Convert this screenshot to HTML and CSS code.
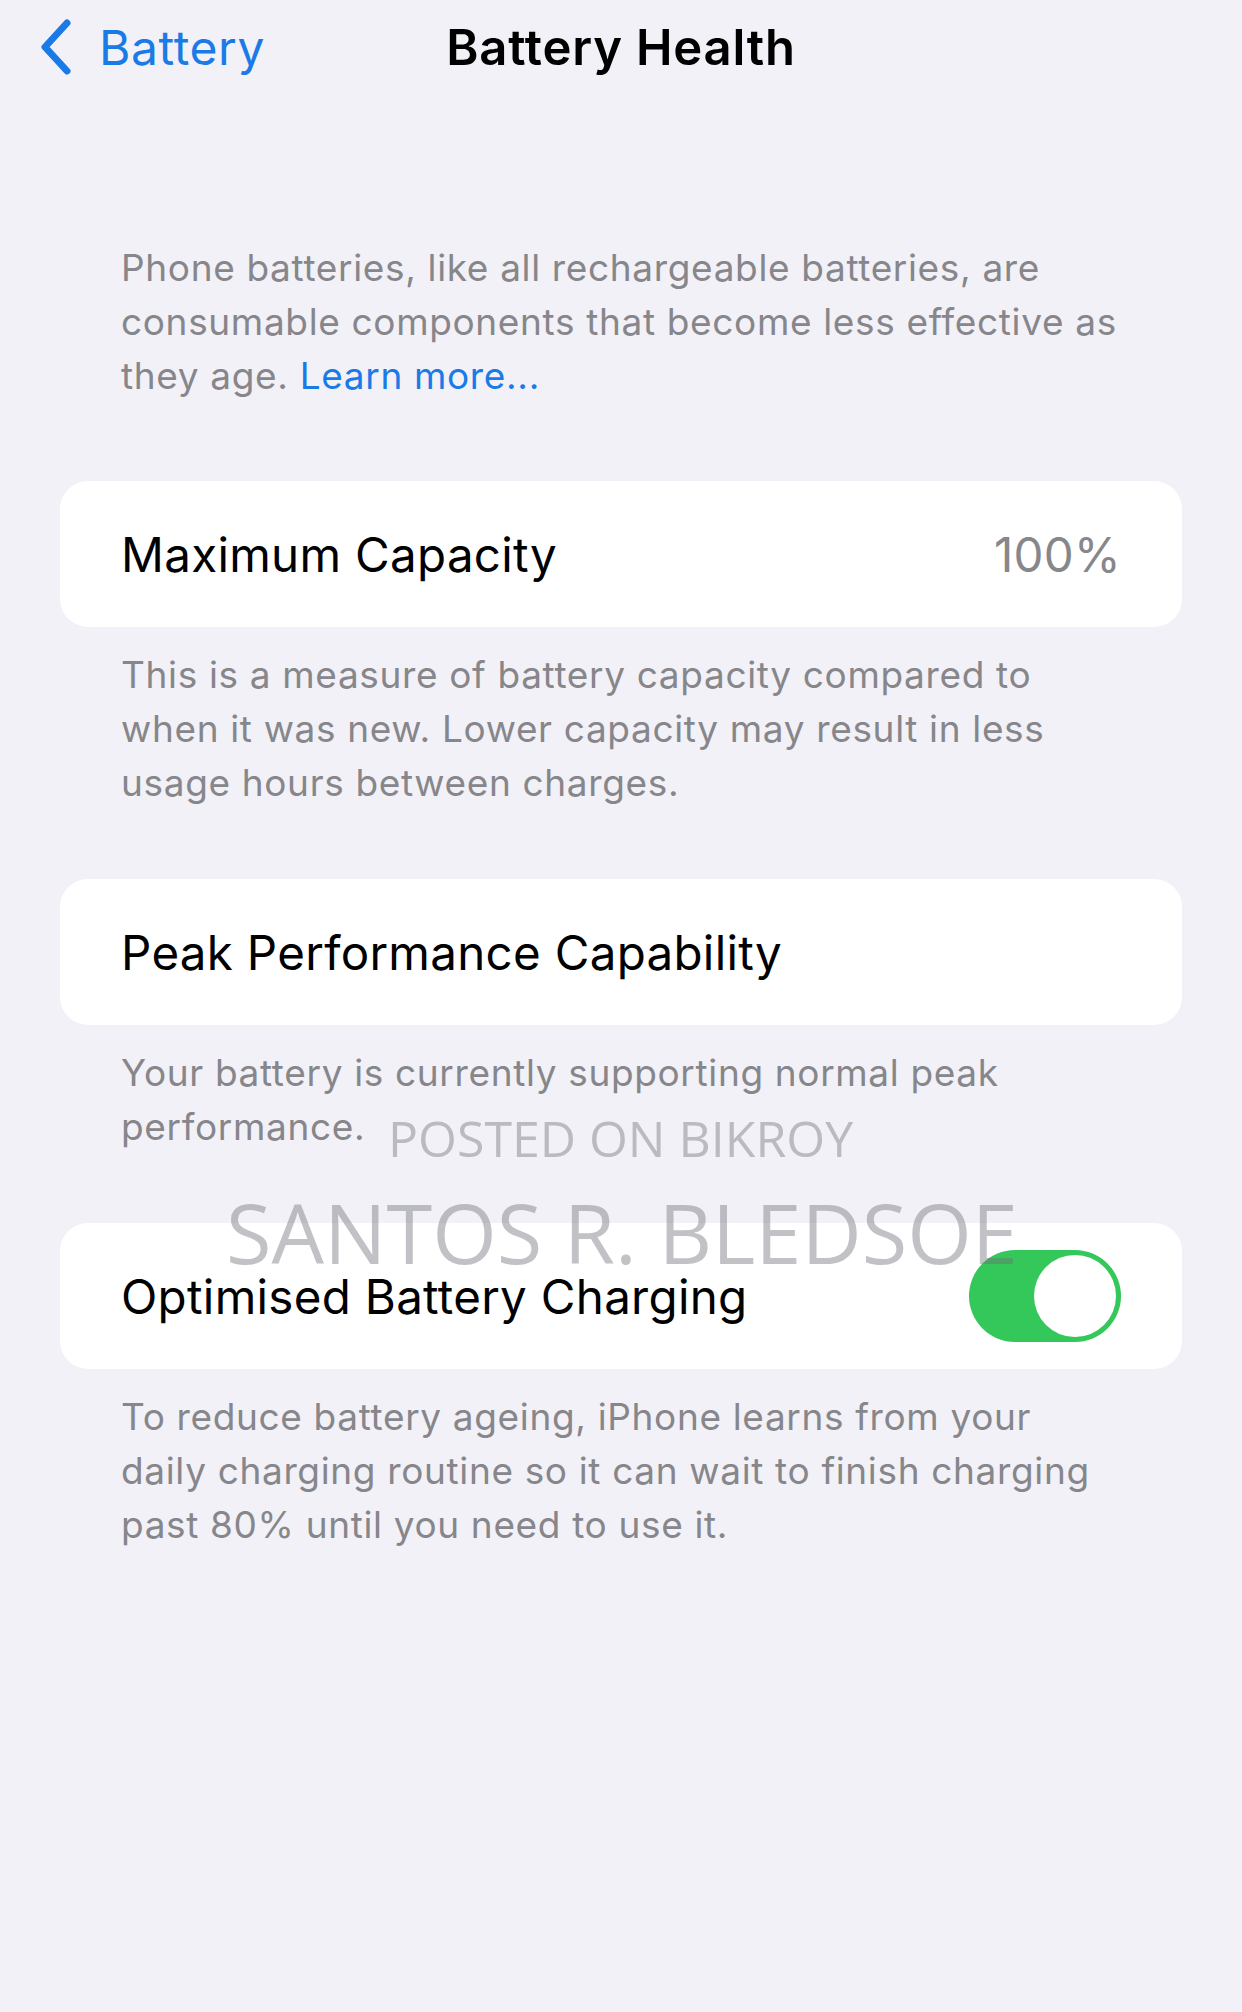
FILE: index.html
```html
<!DOCTYPE html>
<html lang="en">
<head>
    <meta charset="UTF-8">
    <meta name="viewport" content="width=device-width, initial-scale=1.0">
    <title>Battery Health</title>
    <link rel="stylesheet" href="styles.css">
</head>
<body>
    <!-- Навигация -->
    <div class="nav">
        <a class="back" href="#">
            <svg class="chevron" width="34" height="58" viewBox="0 0 34 58">
                <path d="M28 5 L6 29 L28 53" fill="none" stroke="#1a7ae6" stroke-width="7" stroke-linecap="round" stroke-linejoin="round"/>
            </svg>
            <span>Battery</span>
        </a>
        <h1>Battery Health</h1>
        <div></div>
    </div>

    <div class="content">
        <p class="intro">Phone batteries, like all rechargeable batteries, are consumable components that become less effective as they age. <a href="#">Learn more...</a></p>

        <div class="card">
            <span class="label">Maximum Capacity</span>
            <span class="value">100%</span>
        </div>
        <p class="note">This is a measure of battery capacity compared to when it was new. Lower capacity may result in less usage hours between charges.</p>

        <div class="card">
            <span class="label">Peak Performance Capability</span>
        </div>
        <p class="note">Your battery is currently supporting normal peak performance.</p>

        <div class="card">
            <span class="label">Optimised Battery Charging</span>
            <div class="toggle"><div class="knob"></div></div>
        </div>
        <p class="note">To reduce battery ageing, iPhone learns from your<br>daily charging routine so it can wait to finish charging past 80% until you need to use it.</p>
    </div>

    <!-- Водяные знаки -->
    <div class="mark mark-small">POSTED ON BIKROY</div>
    <div class="mark mark-big">SANTOS R. BLEDSOE</div>
</body>
</html>
```

FILE: styles.css
```css
body {
    margin: 0;
    background-color: #f2f1f7;
    font-family: Inter, "Noto Sans", sans-serif;
    color: #000;
    position: relative;
    min-height: 2012px;
}

.nav {
    height: 94px;
    display: grid;
    grid-template-columns: 1fr auto 1fr;
    align-items: center;
}

.back {
    display: flex;
    align-items: center;
    gap: 26px;
    padding-left: 39px;
    color: #1a7ae6;
    text-decoration: none;
    font-size: 48px;
    letter-spacing: 0.6px;
}

.chevron {
    display: block;
}

.nav h1 {
    margin: 0;
    font-size: 49px;
    font-weight: 600;
    letter-spacing: 0.8px;
}

.content {
    padding: 0 60px;
}

.intro, .note {
    margin: 0;
    padding: 0 50px 0 61px;
    font-size: 37px;
    line-height: 54px;
    color: #86868b;
    letter-spacing: 0.65px;
}

.intro {
    margin-top: 147px;
}

.intro a {
    color: #1a7ae6;
    text-decoration: none;
}

.card {
    height: 146px;
    margin-top: 78px;
    padding: 0 61px;
    background: #ffffff;
    border-radius: 28px;
    display: flex;
    align-items: center;
    justify-content: space-between;
    font-size: 47.5px;
    letter-spacing: 0.3px;
}

.intro + .card {
    margin-top: 78px;
}

.note + .card {
    margin-top: 69px;
}

.card + .note {
    margin-top: 21px;
}

.value {
    color: #86868b;
}

.toggle {
    width: 152px;
    height: 92px;
    border-radius: 46px;
    background: #34c759;
    display: flex;
    align-items: center;
    justify-content: flex-end;
    padding: 0 5px;
    box-sizing: border-box;
}

.knob {
    width: 82px;
    height: 82px;
    border-radius: 50%;
    background: #ffffff;
}

.mark {
    position: absolute;
    font-family: "Open Sans", "Noto Sans", sans-serif;
    color: rgba(110, 110, 118, 0.42);
    white-space: nowrap;
}

.mark-small {
    left: 388px;
    top: 1104px;
    font-size: 50px;
}

.mark-big {
    left: 226px;
    top: 1175px;
    font-size: 83px;
}
```
